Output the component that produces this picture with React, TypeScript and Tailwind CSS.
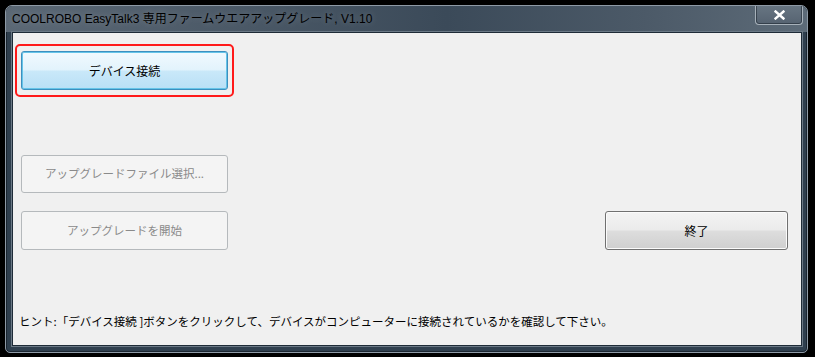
import React from "react";

const jp = "font-['Noto_Sans_CJK_JP','Liberation_Sans',sans-serif]";

export default function App() {
  return (
    <div className="w-[815px] h-[357px] bg-black pt-[5px] pl-[5px] overflow-hidden">
      {/* window frame */}
      <div className="w-[803px] h-[348px] rounded-t-[7px] rounded-b-[5px] border border-[#8e9aa6] bg-[#2f3f4e] flex flex-col overflow-hidden shadow-[inset_0_0_0_1px_#1a2530]">
        {/* title bar */}
        <div className="h-[26px] flex items-start justify-between bg-[linear-gradient(90deg,#5b6875_0%,#4a5866_30%,#3b4a59_55%,#4c5a68_80%,#5d6b78_100%)]">
          <div className="pl-[6px] pt-[5px] text-[12px] leading-[16px] text-black font-['Liberation_Sans','Noto_Sans_CJK_JP',sans-serif] [text-shadow:0_0_6px_rgba(255,255,255,0.25)]">
            COOLROBO EasyTalk3 専用ファームウエアアップグレード, V1.10
          </div>
          <div className="mr-[4px] -mt-px w-[48px] h-[20px] rounded-b-[4px] border border-[#a7b1ba] border-t-0 bg-[linear-gradient(180deg,#687683,#566371)] shadow-[inset_0_0_0_1px_rgba(30,40,50,0.6)] flex items-center justify-center">
            <svg width="11" height="10" viewBox="0 0 11 10">
              <path d="M1.5 1.5 L9.5 8.5 M9.5 1.5 L1.5 8.5" stroke="#ffffff" strokeWidth="2.4" strokeLinecap="square" />
            </svg>
          </div>
        </div>

        {/* client area */}
        <div className="ml-[6px] mr-[5px] h-[314px] border border-[#1e2b37] bg-[#f0f0f0] shadow-[0_0_0_1px_#6b7986] flex flex-col">
          <div className="pl-[2px] pt-[11px]">
            <div className="w-[219px] rounded-[5px] border-2 border-[#ff1a1a] px-[4px] py-[5px]">
              <div className={`h-[39px] w-[207px] rounded-[3px] border border-[#3c8fbf] shadow-[inset_0_0_0_1px_#66c4e8] bg-[linear-gradient(180deg,#f1f9fe_0%,#e2f3fc_48%,#c9e8f9_52%,#b9e0f6_100%)] flex items-center justify-center text-[12px] text-black ${jp}`}>
                デバイス接続
              </div>
            </div>
          </div>

          <div className="pl-[8px] pr-[13px] mt-[58px] flex flex-col gap-[18px]">
            <div className={`h-[38px] w-[207px] rounded-[3px] border border-[#b5b9bc] bg-[#f4f4f4] flex items-center justify-center text-[11.5px] text-[#8a8a8a] ${jp}`}>
              アップグレードファイル選択...
            </div>
            <div className="flex items-start justify-between">
              <div className={`h-[39px] w-[207px] rounded-[3px] border border-[#b5b9bc] bg-[#f4f4f4] flex items-center justify-center text-[11.5px] text-[#8a8a8a] ${jp}`}>
                アップグレードを開始
              </div>
              <div className={`h-[39px] w-[183px] rounded-[3px] border border-[#707070] shadow-[inset_0_0_0_1px_#fbfbfb] bg-[linear-gradient(180deg,#f3f3f3_0%,#ebebeb_48%,#dddddd_52%,#cfcfcf_100%)] flex items-center justify-center text-[12px] text-black ${jp}`}>
                終了
              </div>
            </div>
          </div>

          <div className={`pl-[6px] mt-[63px] text-[11.5px] leading-[16px] text-black whitespace-nowrap ${jp}`}>
            ヒント:「デバイス接続 ]ボタンをクリックして、デバイスがコンピューターに接続されているかを確認して下さい。
          </div>
        </div>
      </div>
    </div>
  );
}
